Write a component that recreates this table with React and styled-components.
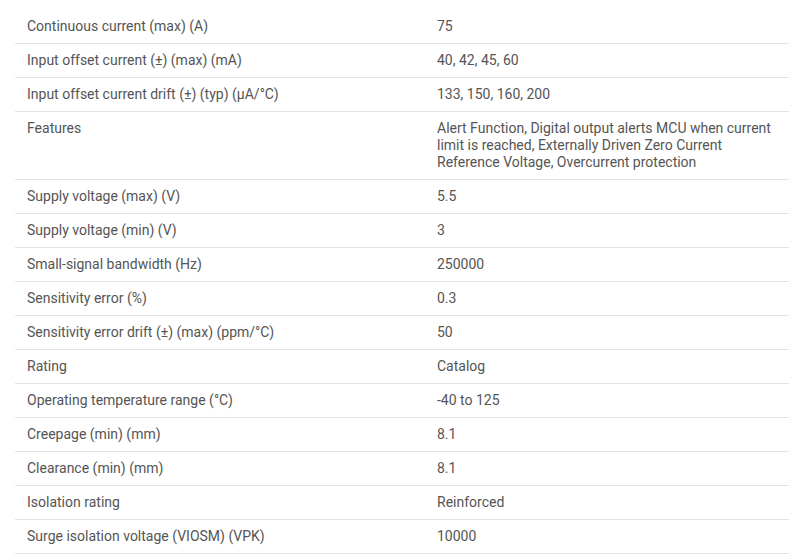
import React from 'react';
import styled, { createGlobalStyle } from 'styled-components';

const rows = [
    ['Continuous current (max) (A)', '75'],
    ['Input offset current (±) (max) (mA)', '40, 42, 45, 60'],
    ['Input offset current drift (±) (typ) (µA/°C)', '133, 150, 160, 200'],
    ['Features', 'Alert Function, Digital output alerts MCU when current limit is reached, Externally Driven Zero Current Reference Voltage, Overcurrent protection'],
    ['Supply voltage (max) (V)', '5.5'],
    ['Supply voltage (min) (V)', '3'],
    ['Small-signal bandwidth (Hz)', '250000'],
    ['Sensitivity error (%)', '0.3'],
    ['Sensitivity error drift (±) (max) (ppm/°C)', '50'],
    ['Rating', 'Catalog'],
    ['Operating temperature range (°C)', '-40 to 125'],
    ['Creepage (min) (mm)', '8.1'],
    ['Clearance (min) (mm)', '8.1'],
    ['Isolation rating', 'Reinforced'],
    ['Surge isolation voltage (VIOSM) (VPK)', '10000'],
];

export default function App() {
    return (
        <>
            <GlobalStyle />
            <Page>
                <Table>
                    <tbody>
                        {rows.map(([name, value]) => (
                            <Row key={name}>
                                <NameCell>{name}</NameCell>
                                <ValueCell>{value}</ValueCell>
                            </Row>
                        ))}
                    </tbody>
                </Table>
            </Page>
        </>
    );
}

const GlobalStyle = createGlobalStyle`
    body {
        margin: 0;
        background: #fff;
        font-family: Roboto, "Liberation Sans", sans-serif;
    }
`;

const Page = styled.div`
    padding: 10px 0 0 15px;
`;

const Table = styled.table`
    width: 100%;
    border-collapse: collapse;
    table-layout: fixed;
`;

const Row = styled.tr`
    border-bottom: 1px solid #e4e4e4;
`;

const Cell = styled.td`
    padding: 8px 12px;
    font-size: 14px;
    line-height: 17px;
    color: #555;
    vertical-align: top;
`;

const NameCell = styled(Cell)`
    width: 386px;
`;

const ValueCell = styled(Cell)``;
